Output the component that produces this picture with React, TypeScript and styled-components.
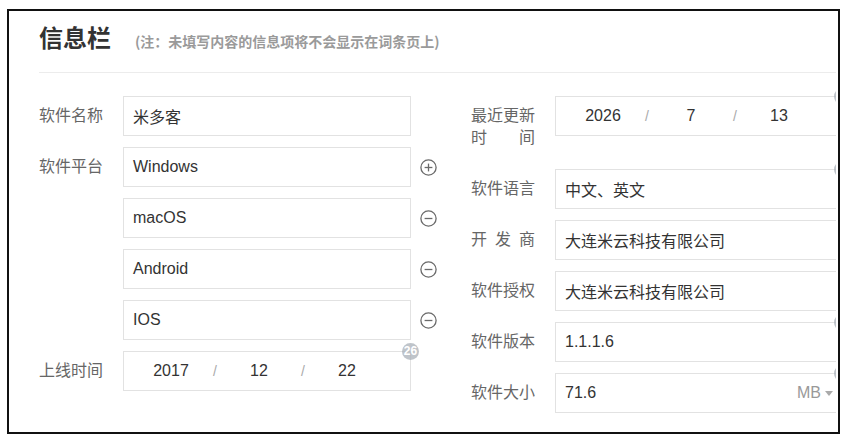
import styled, { createGlobalStyle } from "styled-components";

const GlobalStyle = createGlobalStyle`
  html, body {
    margin: 0;
    padding: 0;
    background: #fff;
  }
  body {
    font-family: "Liberation Sans", "Noto Sans CJK SC", sans-serif;
  }
`;

const Frame = styled.div`
  box-sizing: border-box;
  margin: 9px 0 0 7px;
  width: 833px;
  height: 425px;
  border: 2px solid #111;
  padding-right: 2px;
  background: #fff;
`;

const Sheet = styled.div`
  height: 100%;
  overflow: hidden;
  padding-left: 30px;
`;

const Header = styled.div`
  display: flex;
  align-items: baseline;
  gap: 24px;
  padding: 9px 0 18px;
  border-bottom: 1px solid #ececec;
`;

const Title = styled.h2`
  margin: 0;
  font-family: "Noto Sans CJK SC", sans-serif;
  font-size: 24px;
  line-height: 34px;
  font-weight: 700;
  color: #333;
`;

const Note = styled.span`
  font-family: "Noto Sans CJK SC", sans-serif;
  font-size: 14px;
  font-weight: 700;
  color: #9a9a9a;
`;

const Form = styled.div`
  display: grid;
  grid-template-columns: 432px 432px;
  align-items: start;
  margin-top: 23px;
`;

const Column = styled.div`
  display: flex;
  flex-direction: column;
  gap: 11px;
`;

const Row = styled.div`
  display: flex;
  align-items: flex-start;
`;

const Label = styled.div`
  flex: 0 0 84px;
  padding: 9px 0;
  font-size: 16px;
  line-height: 22px;
  color: #666;
`;

const LabelText = styled.span<{ $spread?: boolean }>`
  display: inline-block;
  width: 64px;
  text-align: ${(p) => (p.$spread ? "justify" : "left")};
  text-align-last: ${(p) => (p.$spread ? "justify" : "auto")};
`;

const Field = styled.div`
  position: relative;
  box-sizing: border-box;
  flex: 0 0 288px;
  height: 40px;
  display: flex;
  align-items: center;
  padding: 0 9px;
  border: 1px solid #e2e2e2;
  font-size: 16px;
  color: #333;
  background: #fff;
`;

const Value = styled.span`
  flex: 1;
  white-space: nowrap;
`;

const Unit = styled.span`
  display: flex;
  align-items: center;
  gap: 4px;
  color: #999;
  &::after {
    content: "";
    border-left: 4px solid transparent;
    border-right: 4px solid transparent;
    border-top: 5px solid #aaa;
  }
`;

const DateField = styled(Field)`
  padding-left: 12px;
`;

const DatePart = styled.span`
  width: 70px;
  text-align: center;
`;

const Slash = styled.span`
  width: 18px;
  text-align: center;
  color: #aaa;
  font-size: 14px;
`;

const Badge = styled.span`
  position: absolute;
  top: -9px;
  right: -9px;
  width: 17px;
  height: 17px;
  border-radius: 50%;
  background: rgba(170, 176, 184, 0.75);
  color: #fff;
  font-size: 12px;
  font-weight: 700;
  line-height: 17px;
  text-align: center;
`;

const Action = styled.button`
  flex: 0 0 34px;
  height: 40px;
  padding: 0;
  border: 0;
  background: none;
  display: flex;
  align-items: center;
  justify-content: center;
  cursor: pointer;
`;

function RoundIcon({ plus }: { plus?: boolean }) {
  return (
    <svg width="17" height="17" viewBox="0 0 17 17" fill="none" stroke="#6a6a6a" strokeWidth="1.3">
      <circle cx="8.5" cy="8.5" r="7.6" />
      <path d="M4.6 8.5h7.8" />
      {plus && <path d="M8.5 4.6v7.8" />}
    </svg>
  );
}

// a counter dot sits on the top-right corner of some fields; the count is optional
function DateInput({ y, m, d, badge }: { y: string; m: string; d: string; badge?: string | true }) {
  return (
    <DateField>
      <DatePart>{y}</DatePart>
      <Slash>/</Slash>
      <DatePart>{m}</DatePart>
      <Slash>/</Slash>
      <DatePart>{d}</DatePart>
      {badge && <Badge>{badge === true ? null : badge}</Badge>}
    </DateField>
  );
}

const platforms = ["Windows", "macOS", "Android", "IOS"];

export default function App() {
  return (
    <>
      <GlobalStyle />
      <Frame>
        <Sheet>
          <Header>
            <Title>信息栏</Title>
            <Note>(注：未填写内容的信息项将不会显示在词条页上)</Note>
          </Header>
          <Form>
            <Column>
              <Row>
                <Label>
                  <LabelText>软件名称</LabelText>
                </Label>
                <Field>
                  <Value>米多客</Value>
                </Field>
              </Row>
              {platforms.map((p, i) => (
                <Row key={p}>
                  <Label>{i === 0 && <LabelText>软件平台</LabelText>}</Label>
                  <Field>
                    <Value>{p}</Value>
                  </Field>
                  <Action>
                    <RoundIcon plus={i === 0} />
                  </Action>
                </Row>
              ))}
              <Row>
                <Label>
                  <LabelText>上线时间</LabelText>
                </Label>
                <DateInput y="2017" m="12" d="22" badge="26" />
              </Row>
            </Column>
            <Column>
              <Row>
                <Label>
                  <LabelText $spread>最近更新时间</LabelText>
                </Label>
                <DateInput y="2026" m="7" d="13" badge />
              </Row>
              <Row>
                <Label>
                  <LabelText>软件语言</LabelText>
                </Label>
                <Field>
                  <Value>中文、英文</Value>
                  <Badge />
                </Field>
              </Row>
              <Row>
                <Label>
                  <LabelText $spread>开发商</LabelText>
                </Label>
                <Field>
                  <Value>大连米云科技有限公司</Value>
                </Field>
              </Row>
              <Row>
                <Label>
                  <LabelText>软件授权</LabelText>
                </Label>
                <Field>
                  <Value>大连米云科技有限公司</Value>
                </Field>
              </Row>
              <Row>
                <Label>
                  <LabelText>软件版本</LabelText>
                </Label>
                <Field>
                  <Value>1.1.1.6</Value>
                  <Badge />
                </Field>
              </Row>
              <Row>
                <Label>
                  <LabelText>软件大小</LabelText>
                </Label>
                <Field>
                  <Value>71.6</Value>
                  <Unit>MB</Unit>
                  <Badge />
                </Field>
              </Row>
            </Column>
          </Form>
        </Sheet>
      </Frame>
    </>
  );
}
